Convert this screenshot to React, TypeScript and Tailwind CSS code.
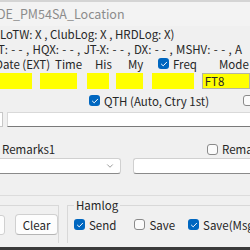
import { ChevronDown } from "lucide-react";

function Box({ checked }: { checked?: boolean }) {
  return checked ? (
    <span className="flex h-[11px] w-[11px] shrink-0 items-center justify-center rounded-[3px] bg-[#0067c0]">
      <svg viewBox="0 0 10 10" className="h-[8px] w-[8px]" fill="none">
        <path d="M1.8 5.2 4 7.3 8.3 2.8" stroke="white" strokeWidth="1.2" strokeLinecap="round" strokeLinejoin="round" />
      </svg>
    </span>
  ) : (
    <span className="block h-[11px] w-[11px] shrink-0 rounded-[3px] border border-[#8a8a8a] bg-[#fbfbfb]" />
  );
}

export default function App() {
  return (
    <div
      className="relative flex h-[250px] w-[250px] flex-col overflow-hidden bg-[#f0f0f0] text-[11.5px] leading-[14px] text-[#262626]"
      style={{ fontFamily: '"Noto Sans CJK JP", "Liberation Sans", sans-serif' }}
    >
      <div className="h-[2px] bg-[#d4d4d4]" />
      <div className="flex h-[24px] items-center bg-[#f3f3f3] text-[12.5px] text-[#8c8c8c]">
        <span className="-ml-[3px] whitespace-nowrap">DE_PM54SA_Location</span>
      </div>
      <div className="mt-[1px] whitespace-nowrap">LoTW: X , ClubLog: X , HRDLog: X)</div>
      <div className="mt-[1px] -ml-[2px] whitespace-nowrap [word-spacing:0.8px]">
        T: - - , HQX: - - , JT-X: - - , DX: - - , MSHV: - - , A
      </div>
      <div className="flex h-[15px] items-center whitespace-nowrap">
        <span className="-ml-[5px] w-[60px]">Date (EXT)</span>
        <span className="w-[40px]">Time</span>
        <span className="w-[33px]">His</span>
        <span className="w-[30px]">My</span>
        <Box checked />
        <span className="ml-[4px] w-[46px]">Freq</span>
        <span>Mode</span>
      </div>
      <div className="mt-[2px] flex h-[16px]">
        <div className="w-[33px] bg-[#ffff00]" />
        <div className="ml-[8px] w-[39px] bg-[#ffff00]" />
        <div className="ml-[10px] w-[23px] bg-[#ffff00]" />
        <div className="ml-[7px] w-[28px] bg-[#ffff00]" />
        <div className="ml-[9px] w-[43px] bg-[#ffff00]" />
        <div className="ml-[8px] flex w-[50px] items-center border border-[#b5b5a0] bg-[#ffff00] pl-[2px]">FT8</div>
      </div>
      <div className="mt-[6px] flex h-[11px] items-center whitespace-nowrap">
        <span className="ml-[89px]">
          <Box checked />
        </span>
        <span className="ml-[4px]">QTH (Auto, Ctry 1st)</span>
        <span className="ml-auto mr-[-4px]">
          <Box />
        </span>
      </div>
      <div className="mt-[6px] flex h-[15px]">
        <div className="w-[3px] border-y border-r border-[#c8c8c8] bg-white" />
        <div className="ml-[4px] flex-1 border-b border-[#7a7a7a] border-t border-l border-t-[#d9d9d9] border-l-[#d9d9d9] bg-white" />
      </div>
      <div className="mt-[15px] flex h-[14px] items-center whitespace-nowrap">
        <span className="ml-[2px]">Remarks1</span>
        <span className="ml-auto flex items-center gap-[4px]">
          <Box />
          <span className="w-[28px] overflow-hidden">Remarks2</span>
        </span>
      </div>
      <div className="mt-[2px] flex h-[16px]">
        <div className="flex w-[121px] items-center justify-end rounded-r-[3px] border border-l-0 border-[#d0d0d0] border-b-[#8a8a8a] bg-white pr-[5px]">
          <ChevronDown className="h-[10px] w-[10px] text-[#606060]" strokeWidth={1.5} />
        </div>
        <div className="ml-[12px] flex-1 rounded-l-[3px] border border-r-0 border-[#d0d0d0] border-b-[#8a8a8a] bg-white" />
      </div>
      <div className="mt-[21px] h-[1px] bg-[#dcdcdc]" />
      <div className="mt-[9px] flex h-[38px]">
        <div className="flex w-[69px] items-center border-t border-r border-[#d8d8d8]">
          <div className="-ml-[4px] h-[20px] w-[9px] rounded-[3px] border border-[#d0d0d0] bg-[#fdfdfd]" />
          <div className="ml-[10px] flex h-[21px] w-[43px] items-center justify-center rounded-[4px] border border-[#d0d0d0] border-b-[#b5b5b5] bg-[#fdfdfd]">
            Clear
          </div>
        </div>
        <div className="relative ml-[8px] flex flex-1 items-center border-l border-t border-[#d8d8d8] pl-[6px] whitespace-nowrap">
          <span className="absolute -top-[8px] left-[6px] bg-[#f0f0f0] px-[2px]">Hamlog</span>
          <Box checked />
          <span className="ml-[4px]">Send</span>
          <span className="ml-[18px]">
            <Box />
          </span>
          <span className="ml-[4px]">Save</span>
          <span className="ml-[13px]">
            <Box checked />
          </span>
          <span className="ml-[4px]">Save(Msg)</span>
        </div>
      </div>
      <div className="mt-auto h-[3px] bg-[#3a3a3a]" />
    </div>
  );
}
